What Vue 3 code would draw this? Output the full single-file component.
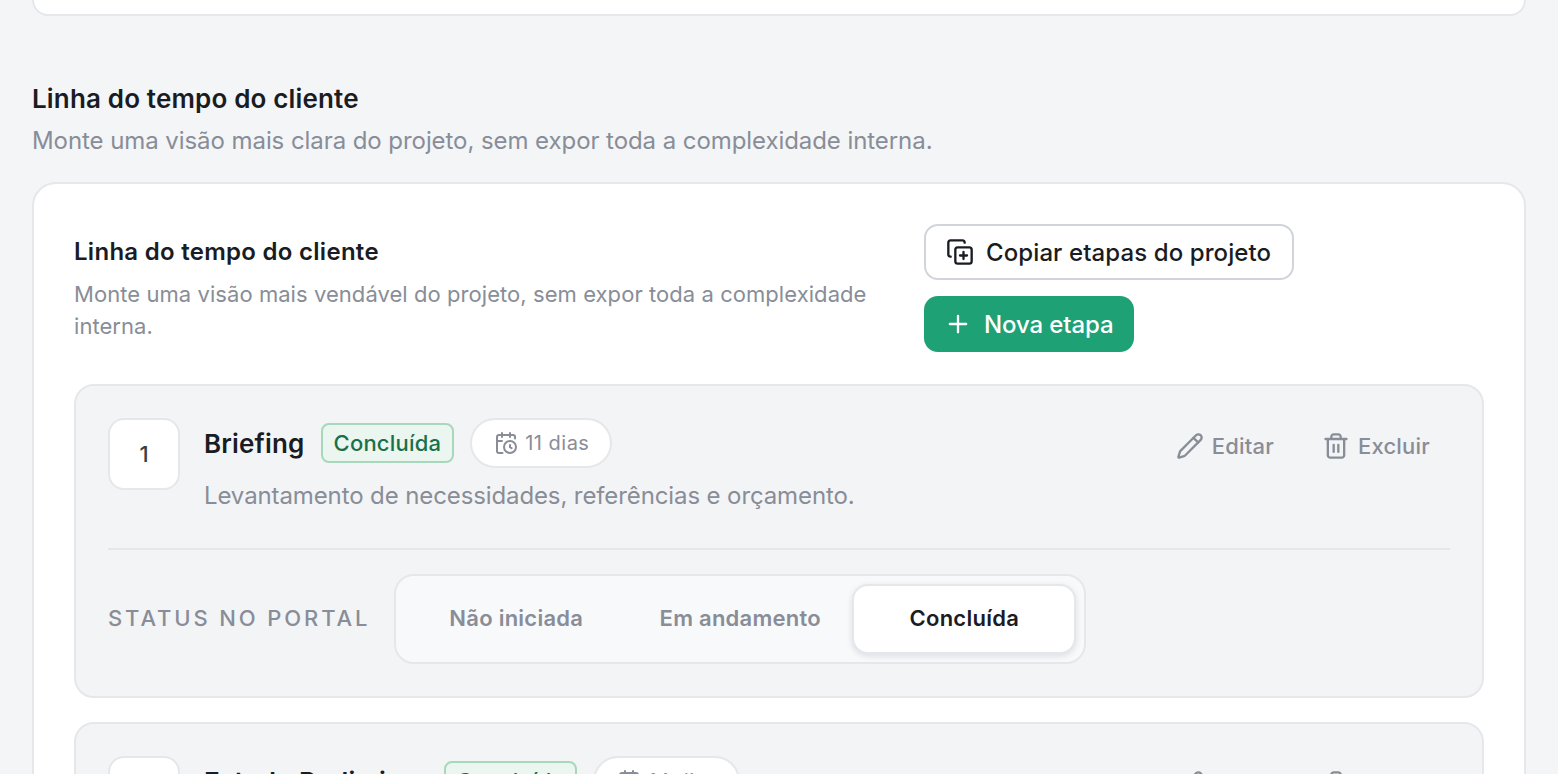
<script setup>
const stages = [
  { n: 1, title: 'Briefing', days: '11 dias', desc: 'Levantamento de necessidades, referências e orçamento.' },
  { n: 2, title: 'Estudo Preliminar', days: '14 dias', desc: 'Primeiras definições de layout e conceito.' },
]
const options = ['Não iniciada', 'Em andamento', 'Concluída']
</script>

<template>
  <div class="page">
    <div class="top-card"></div>
    <h2 class="section-title">Linha do tempo do cliente</h2>
    <p class="section-desc">Monte uma visão mais clara do projeto, sem expor toda a complexidade interna.</p>
    <section class="card">
      <header class="card-head">
        <div class="head-text">
          <h3 class="card-title">Linha do tempo do cliente</h3>
          <p class="card-desc">Monte uma visão mais vendável do projeto, sem expor toda a complexidade interna.</p>
        </div>
        <div class="head-actions">
          <button class="btn btn-outline">
            <svg class="ic26" viewBox="0 0 24 24"><path d="M15 12v6M12 15h6"/><rect x="8" y="8" width="14" height="14" rx="2"/><path d="M4 16c-1.1 0-2-.9-2-2V4c0-1.100.9-2 2-2h10c1.100 0 2 .9 2 2"/></svg>
            Copiar etapas do projeto
          </button>
          <button class="btn btn-green">
            <svg class="ic26" viewBox="0 0 24 24"><path d="M5 12h14M12 5v14"/></svg>
            Nova etapa
          </button>
        </div>
      </header>
      <div class="stages">
        <article v-for="s in stages" :key="s.n" class="stage">
          <div class="stage-top">
            <div class="num">{{ s.n }}</div>
            <div class="stage-main">
              <div class="stage-line">
                <span class="stage-title">{{ s.title }}</span>
                <span class="badge">Concluída</span>
                <span class="pill">
                  <svg class="ic24" viewBox="0 0 24 24"><path d="M16 14v2.200l1.600 1M16 2v4M21 7.500V6a2 2 0 0 0-2-2H5a2 2 0 0 0-2 2v14a2 2 0 0 0 2 2h3.500M3 10h5M8 2v4"/><circle cx="16" cy="16" r="6"/></svg>
                  {{ s.days }}
                </span>
              </div>
              <p class="stage-desc">{{ s.desc }}</p>
            </div>
            <div class="stage-actions">
              <span class="act">
                <svg class="ic26" viewBox="0 0 24 24"><path d="M21.174 6.812a1 1 0 0 0-3.986-3.987L3.842 16.174a2 2 0 0 0-.5.83l-1.321 4.352a.5.5 0 0 0 .623.622l4.353-1.320a2 2 0 0 0 .83-.497z"/><path d="m15 5 4 4"/></svg>
                Editar
              </span>
              <span class="act">
                <svg class="ic26" viewBox="0 0 24 24"><path d="M3 6h18M19 6v14c0 1-1 2-2 2H7c-1 0-2-1-2-2V6M8 6V4c0-1 1-2 2-2h4c1 0 2 1 2 2v2M10 11v6M14 11v6"/></svg>
                Excluir
              </span>
            </div>
          </div>
          <div class="status-row">
            <span class="status-label">STATUS NO PORTAL</span>
            <div class="segment">
              <span v-for="o in options" :key="o" class="seg" :class="{ active: o === 'Concluída' }">{{ o }}</span>
            </div>
          </div>
        </article>
      </div>
    </section>
  </div>
</template>

<style>
html, body { margin: 0; overflow: hidden; background: #f4f5f7; }
</style>

<style scoped>
.page {
  height: 774px;
  overflow: hidden;
  box-sizing: border-box;
  padding: 0 32px;
  background: #f4f5f7;
  font-family: Inter, "Liberation Sans", sans-serif;
  color: #1a1c23;
}
.top-card {
  height: 16px;
  box-sizing: border-box;
  background: #fff;
  border: 2px solid #e5e7eb;
  border-top: 0;
  border-radius: 0 0 24px 24px;
}
h2, h3, p { margin: 0; }
.section-title { margin-top: 64px; font-size: 26px; line-height: 38px; font-weight: 600; letter-spacing: 0.16px; }
.section-desc { margin-top: 6px; font-size: 24px; line-height: 34px; color: #888d97; letter-spacing: -0.07px; }
.card {
  margin-top: 24px;
  box-sizing: border-box;
  background: #fff;
  border: 2px solid #e5e7eb;
  border-radius: 24px;
  padding: 40px;
}
.card-head { display: flex; gap: 40px; }
.head-text { width: 810px; flex: none; padding-top: 10px; }
.card-title { font-size: 24px; line-height: 36px; font-weight: 600; letter-spacing: 0.28px; }
.card-desc { margin-top: 8px; font-size: 22px; line-height: 32px; color: #888d97; letter-spacing: 0.06px; }
.head-actions { display: flex; flex-direction: column; align-items: flex-start; gap: 16px; }
.btn {
  display: flex;
  align-items: center;
  height: 56px;
  box-sizing: border-box;
  border-radius: 14px;
  font: 500 24px Inter, "Liberation Sans", sans-serif;
  cursor: pointer;
}
.btn-outline { background: #fff; border: 2px solid #d1d5db; color: #1a1c23; padding: 0 21px 0 20px; gap: 12px; letter-spacing: 0.1px; }
.btn-green { background: #1fa176; border: 0; color: #fff; padding: 0 20px; gap: 12px; letter-spacing: -0.1px; }
svg { fill: none; stroke: currentColor; stroke-width: 2; stroke-linecap: round; stroke-linejoin: round; flex: none; }
.ic26 { width: 28px; height: 28px; }
.ic24 { width: 24px; height: 24px; }
.stages { display: flex; flex-direction: column; gap: 24px; margin-top: 32px; }
.stage {
  background: #f3f4f6;
  border: 2px solid #e5e7eb;
  border-radius: 20px;
  padding: 32px;
}
.stage-top { display: flex; padding-bottom: 36px; border-bottom: 2px solid #e5e7eb; }
.num {
  width: 72px;
  height: 72px;
  box-sizing: border-box;
  flex: none;
  display: flex;
  align-items: center;
  justify-content: center;
  background: #fff;
  border: 2px solid #e5e7eb;
  border-radius: 16px;
  font-size: 22px;
  font-weight: 500;
  color: #3a3d45;
}
.stage-main { flex: 1; margin-left: 24px; }
.stage-line { display: flex; align-items: center; gap: 16px; height: 50px; }
.stage-title { font-size: 26px; font-weight: 600; letter-spacing: 0.18px; }
.badge {
  box-sizing: border-box;
  height: 40px;
  display: flex;
  align-items: center;
  padding: 0 11px;
  background: #ebf6f0;
  border: 2px solid #a8d8bc;
  border-radius: 8px;
  color: #1a7048;
  font-size: 22px;
  font-weight: 500;
  letter-spacing: 0.2px;
}
.pill {
  box-sizing: border-box;
  height: 50px;
  display: flex;
  align-items: center;
  gap: 7px;
  padding: 0 21px 0 22px;
  background: #fff;
  border: 2px solid #e5e7eb;
  border-radius: 25px;
  color: #888d97;
  font-size: 20px;
  letter-spacing: 0.5px;
}
.stage-desc { margin-top: 12px; font-size: 24px; line-height: 32px; color: #888d97; letter-spacing: -0.11px; }
.stage-actions { display: flex; gap: 48px; height: 56px; align-items: center; margin-right: 20px; }
.act { display: flex; align-items: center; gap: 8px; color: #888d97; font-size: 22px; font-weight: 500; letter-spacing: 0.2px; }
.status-row { display: flex; align-items: center; gap: 24px; margin-top: 24px; }
.status-label { font-size: 22px; font-weight: 500; letter-spacing: 2.88px; color: #888d97; padding-bottom: 2px; }
.segment {
  display: flex;
  box-sizing: border-box;
  height: 90px;
  padding: 8px;
  background: #f8f9fb;
  border: 2px solid #e5e7eb;
  border-radius: 20px;
}
.seg {
  display: flex;
  align-items: center;
  justify-content: center;
  width: 224px;
  padding-bottom: 2px;
  box-sizing: border-box;
  border-radius: 16px;
  font-size: 22px;
  font-weight: 600;
  letter-spacing: 0.25px;
  color: #888d97;
}
.seg.active { background: #fff; color: #1a1c23; box-shadow: 0 2px 6px rgba(17, 24, 39, 0.12); border: 2px solid #e5e7eb; }
</style>
